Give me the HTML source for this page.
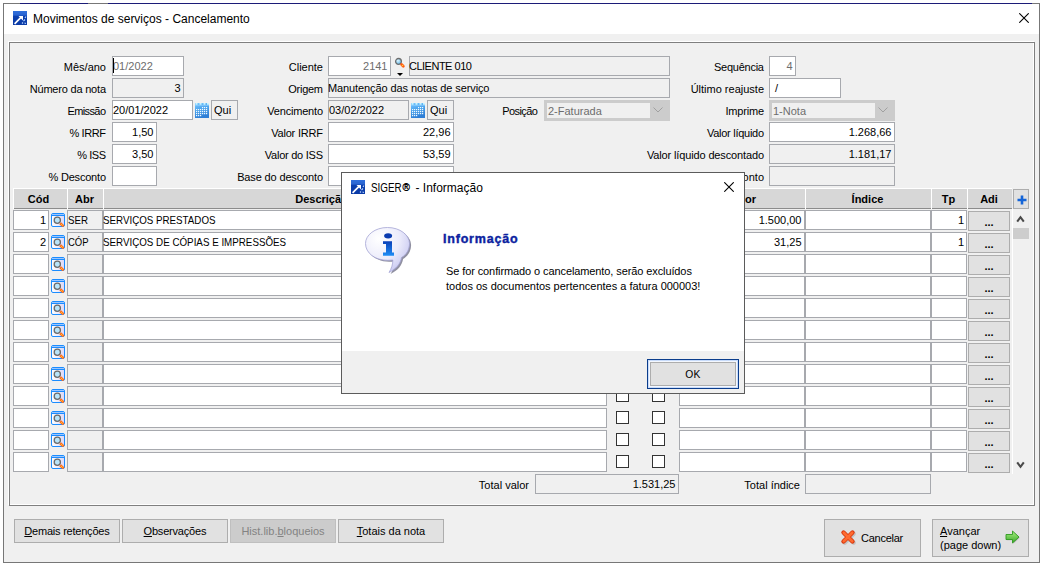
<!DOCTYPE html><html><head><meta charset="utf-8"><style>
*{margin:0;padding:0;box-sizing:border-box}
html,body{width:1044px;height:567px;overflow:hidden;background:#fff}
body{position:relative;font-family:"Liberation Sans",sans-serif;font-size:11px;color:#000}
.b{position:absolute;border:1px solid #a9a9a9}
.f{position:absolute}
.t{position:absolute;white-space:nowrap;line-height:13px;height:13px}
</style></head><body>
<div class="b" style="left:3px;top:3px;width:1037px;height:560px;background:#f0f0f0;border-color:#777;"></div>
<div class="f" style="left:4px;top:4px;width:1035px;height:30px;background:#fff"></div>
<div class="f" style="left:20px;top:3px;width:68px;height:1px;background:#1c1c78"></div>
<div class="f" style="left:108px;top:3px;width:924px;height:1px;background:#1c1c78"></div>
<svg class="f" style="left:13px;top:11px" width="14" height="14" viewBox="0 0 14 14"><defs><linearGradient id="tg" x1="0" y1="0" x2="0" y2="1"><stop offset="0" stop-color="#2f6fdc"/><stop offset="0.3" stop-color="#2a64d0"/><stop offset="0.36" stop-color="#0b3fae"/><stop offset="1" stop-color="#0a3aa6"/></linearGradient></defs><rect width="14" height="14" fill="url(#tg)"/><path d="M5.5 5 H10 V9.5 Z" fill="#fff"/><path d="M1.6 12.8 L8 6.4" stroke="#fff" stroke-width="1.7"/><path d="M10.5 10 l1.5 -1.5 M9 12.5 l1 -1 M11.5 12 l1.5 0.5 M12 7 l1 -1.5" stroke="#b8d4ff" stroke-width="1.1"/></svg>
<div class="t" style="left:33px;top:12px;font-size:12px;line-height:14px;height:14px">Movimentos de serviços - Cancelamento</div>
<svg class="f" style="left:1019px;top:13px" width="10" height="10" viewBox="0 0 10 10"><path d="M0.3 0.3 L9.7 9.7 M9.7 0.3 L0.3 9.7" stroke="#000" stroke-width="1.1"/></svg>
<div class="f" style="left:8px;top:41px;width:1026px;height:464px;border:1px solid #fff"></div>
<div class="f" style="left:9px;top:42px;width:1026px;height:464px;border:1px solid #7f7f7f"></div>
<div class="t" style="right:938.00px;top:61px;text-align:right;">Mês/ano</div>
<div class="b" style="left:112px;top:56px;width:72px;height:20px;background:#fff;border-color:#a7a9ae;"></div>
<div class="t" style="left:113px;top:60px;color:#6d6d6d;">01/2022</div>
<div class="f" style="left:113px;top:58px;width:1px;height:15px;background:#000"></div>
<div class="t" style="right:938.20px;top:83px;text-align:right;letter-spacing:-0.2px;">Número da nota</div>
<div class="b" style="left:112px;top:78px;width:72px;height:20px;background:#f0f0f0;border-color:#a7a9ae;"></div>
<div class="t" style="right:863.50px;top:82px;text-align:right;color:#000;">3</div>
<div class="t" style="right:938.60px;top:105px;text-align:right;letter-spacing:-0.6px;">Emissão</div>
<div class="b" style="left:112px;top:100px;width:81px;height:20px;background:#fff;border-color:#a7a9ae;"></div>
<div class="t" style="left:113px;top:104px;color:#000;">20/01/2022</div>
<svg class="f" style="left:195px;top:103px" width="14" height="15" viewBox="0 0 14 15"><defs><linearGradient id="cg" x1="0" y1="0" x2="0.3" y2="1"><stop offset="0" stop-color="#7cc8ff"/><stop offset="0.5" stop-color="#4aa2ec"/><stop offset="1" stop-color="#2f7fd6"/></linearGradient></defs><rect x="0" y="0" width="14" height="15" fill="url(#cg)"/><path d="M0.5 0.9h2M4.5 0.9h2M8.5 0.9h2M12 0.9h2" stroke="#c8f4ff" stroke-width="1.6"/><rect x="0" y="2" width="14" height="1" fill="#8fd0ff" opacity="0.6"/><rect x="7" y="4" width="1.2" height="1.2" fill="#f0faff"/><rect x="9" y="4" width="1.2" height="1.2" fill="#f0faff"/><rect x="11" y="4" width="1.2" height="1.2" fill="#f0faff"/><rect x="1" y="6" width="1.2" height="1.2" fill="#f0faff"/><rect x="3" y="6" width="1.2" height="1.2" fill="#f0faff"/><rect x="5" y="6" width="1.2" height="1.2" fill="#f0faff"/><rect x="7" y="6" width="1.2" height="1.2" fill="#f0faff"/><rect x="9" y="6" width="1.2" height="1.2" fill="#f0faff"/><rect x="11" y="6" width="1.2" height="1.2" fill="#f0faff"/><rect x="1" y="8" width="1.2" height="1.2" fill="#f0faff"/><rect x="3" y="8" width="1.2" height="1.2" fill="#f0faff"/><rect x="5" y="8" width="1.2" height="1.2" fill="#f0faff"/><rect x="7" y="8" width="1.2" height="1.2" fill="#f0faff"/><rect x="9" y="8" width="1.2" height="1.2" fill="#f0faff"/><rect x="11" y="8" width="1.2" height="1.2" fill="#f0faff"/><rect x="1" y="10" width="1.2" height="1.2" fill="#f0faff"/><rect x="3" y="10" width="1.2" height="1.2" fill="#f0faff"/><rect x="5" y="10" width="1.2" height="1.2" fill="#f0faff"/><rect x="7" y="10" width="1.2" height="1.2" fill="#f0faff"/><rect x="9" y="10" width="1.2" height="1.2" fill="#f0faff"/><rect x="11" y="10" width="1.2" height="1.2" fill="#f0faff"/><rect x="1" y="12" width="1.2" height="1.2" fill="#f0faff"/><rect x="3" y="12" width="1.2" height="1.2" fill="#f0faff"/><rect x="5" y="12" width="1.2" height="1.2" fill="#f0faff"/></svg>
<div class="b" style="left:211px;top:100px;width:27px;height:20px;background:#f0f0f0;border-color:#a7a9ae;"></div>
<div class="t" style="left:214px;top:104px;">Qui</div>
<div class="t" style="right:938.40px;top:127px;text-align:right;letter-spacing:-0.4px;">% IRRF</div>
<div class="b" style="left:112px;top:122px;width:45px;height:20px;background:#fff;border-color:#a7a9ae;"></div>
<div class="t" style="right:890.50px;top:126px;text-align:right;color:#000;">1,50</div>
<div class="t" style="right:938.45px;top:149px;text-align:right;letter-spacing:-0.45px;">% ISS</div>
<div class="b" style="left:112px;top:144px;width:45px;height:20px;background:#fff;border-color:#a7a9ae;"></div>
<div class="t" style="right:890.50px;top:148px;text-align:right;color:#000;">3,50</div>
<div class="t" style="right:938.20px;top:171px;text-align:right;letter-spacing:-0.2px;">% Desconto</div>
<div class="b" style="left:112px;top:166px;width:45px;height:20px;background:#fff;border-color:#a7a9ae;"></div>
<div class="t" style="right:721.00px;top:61px;text-align:right;">Cliente</div>
<div class="b" style="left:328px;top:56px;width:63px;height:20px;background:#fff;border-color:#a7a9ae;"></div>
<div class="t" style="right:656.50px;top:60px;text-align:right;color:#6d6d6d;">2141</div>
<svg class="f" style="left:394px;top:57px" width="12" height="20" viewBox="0 0 12 20"><defs><radialGradient id="mg" cx="0.4" cy="0.35" r="0.7"><stop offset="0" stop-color="#e0f6ff"/><stop offset="1" stop-color="#5ab4e8"/></radialGradient></defs><circle cx="4.5" cy="4.4" r="2.9" fill="url(#mg)" stroke="#6e6e6e" stroke-width="1.3"/><path d="M7.6 7.6 L9.3 9.3" stroke="#ff5a10" stroke-width="2.8" stroke-linecap="round"/><circle cx="8.5" cy="8.5" r="0.8" fill="#ffd040"/><path d="M3 16 L9 16 L6 19 Z" fill="#000"/></svg>
<div class="b" style="left:409px;top:56px;width:261px;height:20px;background:#f0f0f0;border-color:#a7a9ae;"></div>
<div class="t" style="left:409px;top:60px;letter-spacing:-0.5px;color:#000;">CLIENTE 010</div>
<div class="t" style="right:721.28px;top:83px;text-align:right;letter-spacing:-0.28px;">Origem</div>
<div class="b" style="left:328px;top:78px;width:342px;height:20px;background:#f0f0f0;border-color:#a7a9ae;"></div>
<div class="t" style="left:328px;top:82px;letter-spacing:-0.1px;color:#000;">Manutenção das notas de serviço</div>
<div class="t" style="right:721.20px;top:105px;text-align:right;letter-spacing:-0.2px;">Vencimento</div>
<div class="b" style="left:328px;top:100px;width:81px;height:20px;background:#f0f0f0;border-color:#a7a9ae;"></div>
<div class="t" style="left:329px;top:104px;color:#000;">03/02/2022</div>
<svg class="f" style="left:411px;top:103px" width="14" height="15" viewBox="0 0 14 15"><defs><linearGradient id="cg" x1="0" y1="0" x2="0.3" y2="1"><stop offset="0" stop-color="#7cc8ff"/><stop offset="0.5" stop-color="#4aa2ec"/><stop offset="1" stop-color="#2f7fd6"/></linearGradient></defs><rect x="0" y="0" width="14" height="15" fill="url(#cg)"/><path d="M0.5 0.9h2M4.5 0.9h2M8.5 0.9h2M12 0.9h2" stroke="#c8f4ff" stroke-width="1.6"/><rect x="0" y="2" width="14" height="1" fill="#8fd0ff" opacity="0.6"/><rect x="7" y="4" width="1.2" height="1.2" fill="#f0faff"/><rect x="9" y="4" width="1.2" height="1.2" fill="#f0faff"/><rect x="11" y="4" width="1.2" height="1.2" fill="#f0faff"/><rect x="1" y="6" width="1.2" height="1.2" fill="#f0faff"/><rect x="3" y="6" width="1.2" height="1.2" fill="#f0faff"/><rect x="5" y="6" width="1.2" height="1.2" fill="#f0faff"/><rect x="7" y="6" width="1.2" height="1.2" fill="#f0faff"/><rect x="9" y="6" width="1.2" height="1.2" fill="#f0faff"/><rect x="11" y="6" width="1.2" height="1.2" fill="#f0faff"/><rect x="1" y="8" width="1.2" height="1.2" fill="#f0faff"/><rect x="3" y="8" width="1.2" height="1.2" fill="#f0faff"/><rect x="5" y="8" width="1.2" height="1.2" fill="#f0faff"/><rect x="7" y="8" width="1.2" height="1.2" fill="#f0faff"/><rect x="9" y="8" width="1.2" height="1.2" fill="#f0faff"/><rect x="11" y="8" width="1.2" height="1.2" fill="#f0faff"/><rect x="1" y="10" width="1.2" height="1.2" fill="#f0faff"/><rect x="3" y="10" width="1.2" height="1.2" fill="#f0faff"/><rect x="5" y="10" width="1.2" height="1.2" fill="#f0faff"/><rect x="7" y="10" width="1.2" height="1.2" fill="#f0faff"/><rect x="9" y="10" width="1.2" height="1.2" fill="#f0faff"/><rect x="11" y="10" width="1.2" height="1.2" fill="#f0faff"/><rect x="1" y="12" width="1.2" height="1.2" fill="#f0faff"/><rect x="3" y="12" width="1.2" height="1.2" fill="#f0faff"/><rect x="5" y="12" width="1.2" height="1.2" fill="#f0faff"/></svg>
<div class="b" style="left:427px;top:100px;width:27px;height:20px;background:#f0f0f0;border-color:#a7a9ae;"></div>
<div class="t" style="left:430px;top:104px;">Qui</div>
<div class="t" style="right:721.20px;top:127px;text-align:right;letter-spacing:-0.2px;">Valor IRRF</div>
<div class="b" style="left:328px;top:122px;width:126px;height:20px;background:#fff;border-color:#a7a9ae;"></div>
<div class="t" style="right:593.50px;top:126px;text-align:right;color:#000;">22,96</div>
<div class="t" style="right:721.25px;top:149px;text-align:right;letter-spacing:-0.25px;">Valor do ISS</div>
<div class="b" style="left:328px;top:144px;width:126px;height:20px;background:#fff;border-color:#a7a9ae;"></div>
<div class="t" style="right:593.50px;top:148px;text-align:right;color:#000;">53,59</div>
<div class="t" style="right:721.15px;top:171px;text-align:right;letter-spacing:-0.15px;">Base do desconto</div>
<div class="b" style="left:328px;top:166px;width:126px;height:20px;background:#fff;border-color:#a7a9ae;"></div>
<div class="t" style="right:506.55px;top:105px;text-align:right;letter-spacing:-0.55px;">Posição</div>
<div class="b" style="left:544px;top:100px;width:126px;height:21px;background:#cccccc;border-color:#cccccc;"></div>
<div class="f" style="left:547px;top:103px;width:103px;height:15px;background:#f0f0f0"></div>
<div class="t" style="left:548px;top:105px;color:#6d6d6d">2-Faturada</div>
<svg class="f" style="left:653px;top:107px" width="10" height="6" viewBox="0 0 10 6"><path d="M0.5 0.5 L5 5 L9.5 0.5" fill="none" stroke="#a0a0a0" stroke-width="1"/></svg>
<div class="t" style="right:280.25px;top:61px;text-align:right;letter-spacing:-0.25px;">Sequência</div>
<div class="b" style="left:769px;top:56px;width:27px;height:20px;background:#fff;border-color:#a7a9ae;"></div>
<div class="t" style="right:251.50px;top:60px;text-align:right;color:#6d6d6d;">4</div>
<div class="t" style="right:280.00px;top:83px;text-align:right;">Último reajuste</div>
<div class="b" style="left:769px;top:78px;width:72px;height:20px;background:#fff;border-color:#a7a9ae;"></div>
<div class="t" style="left:775px;top:82px;">/</div>
<div class="t" style="right:280.20px;top:105px;text-align:right;letter-spacing:-0.2px;">Imprime</div>
<div class="b" style="left:769px;top:100px;width:126px;height:21px;background:#cccccc;border-color:#cccccc;"></div>
<div class="f" style="left:772px;top:103px;width:103px;height:15px;background:#f0f0f0"></div>
<div class="t" style="left:773px;top:105px;color:#6d6d6d">1-Nota</div>
<svg class="f" style="left:878px;top:107px" width="10" height="6" viewBox="0 0 10 6"><path d="M0.5 0.5 L5 5 L9.5 0.5" fill="none" stroke="#a0a0a0" stroke-width="1"/></svg>
<div class="t" style="right:280.28px;top:127px;text-align:right;letter-spacing:-0.28px;">Valor líquido</div>
<div class="b" style="left:769px;top:122px;width:126px;height:20px;background:#fff;border-color:#a7a9ae;"></div>
<div class="t" style="right:152.50px;top:126px;text-align:right;color:#000;">1.268,66</div>
<div class="t" style="right:280.14px;top:149px;text-align:right;letter-spacing:-0.14px;">Valor líquido descontado</div>
<div class="b" style="left:769px;top:144px;width:126px;height:20px;background:#f0f0f0;border-color:#a7a9ae;"></div>
<div class="t" style="right:152.50px;top:148px;text-align:right;color:#000;">1.181,17</div>
<div class="t" style="right:280.00px;top:171px;text-align:right;">Valor do desconto</div>
<div class="b" style="left:769px;top:166px;width:126px;height:20px;background:#f0f0f0;border-color:#a7a9ae;"></div>
<div class="f" style="left:13px;top:188px;width:999px;height:21px;background:#fff"></div>
<div class="f" style="left:14px;top:189px;width:53px;height:19px;background:#d7d7d7"></div>
<div class="f" style="left:14px;top:208px;width:53px;height:1px;background:#8c8c8c"></div>
<div class="t" style="left:12px;width:53px;top:193px;text-align:center;font-weight:bold">Cód</div>
<div class="f" style="left:68px;top:189px;width:35px;height:19px;background:#d7d7d7"></div>
<div class="f" style="left:68px;top:208px;width:35px;height:1px;background:#8c8c8c"></div>
<div class="t" style="left:67px;width:35px;top:193px;text-align:center;font-weight:bold">Abr</div>
<div class="f" style="left:104px;top:189px;width:435px;height:19px;background:#d7d7d7"></div>
<div class="f" style="left:104px;top:208px;width:435px;height:1px;background:#8c8c8c"></div>
<div class="t" style="left:104px;width:435px;top:193px;text-align:center;font-weight:bold">Descrição</div>
<div class="f" style="left:540px;top:189px;width:139px;height:19px;background:#d7d7d7"></div>
<div class="f" style="left:540px;top:208px;width:139px;height:1px;background:#8c8c8c"></div>
<div class="f" style="left:680px;top:189px;width:125px;height:19px;background:#d7d7d7"></div>
<div class="f" style="left:680px;top:208px;width:125px;height:1px;background:#8c8c8c"></div>
<div class="t" style="left:680px;width:125px;top:193px;text-align:center;font-weight:bold">Valor</div>
<div class="f" style="left:806px;top:189px;width:125px;height:19px;background:#d7d7d7"></div>
<div class="f" style="left:806px;top:208px;width:125px;height:1px;background:#8c8c8c"></div>
<div class="t" style="left:805px;width:125px;top:193px;text-align:center;font-weight:bold">Índice</div>
<div class="f" style="left:932px;top:189px;width:35px;height:19px;background:#d7d7d7"></div>
<div class="f" style="left:932px;top:208px;width:35px;height:1px;background:#8c8c8c"></div>
<div class="t" style="left:931px;width:35px;top:193px;text-align:center;font-weight:bold">Tp</div>
<div class="f" style="left:968px;top:189px;width:44px;height:19px;background:#d7d7d7"></div>
<div class="f" style="left:968px;top:208px;width:44px;height:1px;background:#8c8c8c"></div>
<div class="t" style="left:967px;width:44px;top:193px;text-align:center;font-weight:bold">Adi</div>
<div class="b" style="left:1013px;top:189px;width:16px;height:20px;background:#e1e1e1;border-color:#adadad;"></div>
<svg class="f" style="left:1016.5px;top:194.5px" width="10" height="10" viewBox="0 0 10 10"><path d="M5 0.5 V9.5 M0.5 5 H9.5" stroke="#1565d8" stroke-width="2.6"/></svg>
<div class="b" style="left:13px;top:210px;width:36px;height:20px;background:#fff;border-color:#a7a9ae;"></div>
<div class="t" style="right:998.00px;top:214px;text-align:right;">1</div>
<svg class="f" style="left:51px;top:213px" width="14" height="14" viewBox="0 0 14 14"><defs><linearGradient id="sg" x1="0" y1="0" x2="1" y2="0"><stop offset="0" stop-color="#ffffff"/><stop offset="1" stop-color="#dcd6f4"/></linearGradient></defs><rect x="0.5" y="0.5" width="13" height="13" rx="1.5" fill="url(#sg)" stroke="#1a8cff" stroke-width="1"/><path d="M1 1.5 H13" stroke="#9cc6ff" stroke-width="1"/><path d="M1 2.5 H13" stroke="#1a8cff" stroke-width="1"/><circle cx="6.3" cy="7.2" r="3.1" fill="#b8e4fa" stroke="#6b6b6b" stroke-width="1.3"/><path d="M9.2 10.2 L12.6 13.4" stroke="#ff6a1a" stroke-width="2.6"/><path d="M10 11 L11.8 12.6" stroke="#ffd040" stroke-width="0.9"/></svg>
<div class="b" style="left:67px;top:210px;width:36px;height:20px;background:#f0f0f0;border-color:#a7a9ae;"></div>
<div class="t" style="left:68px;top:214px;transform:scaleX(0.8810);transform-origin:0 0;">SER</div>
<div class="b" style="left:103px;top:210px;width:504px;height:20px;background:#fff;border-color:#a7a9ae;"></div>
<div class="t" style="left:103px;top:214px;transform:scaleX(0.8880);transform-origin:0 0;">SERVIÇOS PRESTADOS</div>
<div class="f" style="left:616px;top:213px;width:13px;height:13px;border:1px solid #333;background:#fff"></div>
<div class="f" style="left:652px;top:213px;width:13px;height:13px;border:1px solid #333;background:#fff"></div>
<div class="b" style="left:679px;top:210px;width:126px;height:20px;background:#fff;border-color:#a7a9ae;"></div>
<div class="t" style="right:242.50px;top:214px;text-align:right;">1.500,00</div>
<div class="b" style="left:805px;top:210px;width:126px;height:20px;background:#fff;border-color:#a7a9ae;"></div>
<div class="b" style="left:931px;top:210px;width:36px;height:20px;background:#fff;border-color:#a7a9ae;"></div>
<div class="t" style="right:80.00px;top:214px;text-align:right;">1</div>
<div class="b" style="left:968px;top:211px;width:42px;height:20px;background:#e1e1e1;border-color:#adadad;"></div>
<div class="t" style="left:968px;width:42px;top:216px;text-align:center;font-weight:bold">...</div>
<div class="b" style="left:13px;top:232px;width:36px;height:20px;background:#fff;border-color:#a7a9ae;"></div>
<div class="t" style="right:998.00px;top:236px;text-align:right;">2</div>
<svg class="f" style="left:51px;top:235px" width="14" height="14" viewBox="0 0 14 14"><defs><linearGradient id="sg" x1="0" y1="0" x2="1" y2="0"><stop offset="0" stop-color="#ffffff"/><stop offset="1" stop-color="#dcd6f4"/></linearGradient></defs><rect x="0.5" y="0.5" width="13" height="13" rx="1.5" fill="url(#sg)" stroke="#1a8cff" stroke-width="1"/><path d="M1 1.5 H13" stroke="#9cc6ff" stroke-width="1"/><path d="M1 2.5 H13" stroke="#1a8cff" stroke-width="1"/><circle cx="6.3" cy="7.2" r="3.1" fill="#b8e4fa" stroke="#6b6b6b" stroke-width="1.3"/><path d="M9.2 10.2 L12.6 13.4" stroke="#ff6a1a" stroke-width="2.6"/><path d="M10 11 L11.8 12.6" stroke="#ffd040" stroke-width="0.9"/></svg>
<div class="b" style="left:67px;top:232px;width:36px;height:20px;background:#f0f0f0;border-color:#a7a9ae;"></div>
<div class="t" style="left:68px;top:236px;transform:scaleX(0.8636);transform-origin:0 0;">CÓP</div>
<div class="b" style="left:103px;top:232px;width:504px;height:20px;background:#fff;border-color:#a7a9ae;"></div>
<div class="t" style="left:103px;top:236px;transform:scaleX(0.8897);transform-origin:0 0;">SERVIÇOS DE CÓPIAS E IMPRESSÕES</div>
<div class="f" style="left:616px;top:235px;width:13px;height:13px;border:1px solid #333;background:#fff"></div>
<div class="f" style="left:652px;top:235px;width:13px;height:13px;border:1px solid #333;background:#fff"></div>
<div class="b" style="left:679px;top:232px;width:126px;height:20px;background:#fff;border-color:#a7a9ae;"></div>
<div class="t" style="right:242.50px;top:236px;text-align:right;">31,25</div>
<div class="b" style="left:805px;top:232px;width:126px;height:20px;background:#fff;border-color:#a7a9ae;"></div>
<div class="b" style="left:931px;top:232px;width:36px;height:20px;background:#fff;border-color:#a7a9ae;"></div>
<div class="t" style="right:80.00px;top:236px;text-align:right;">1</div>
<div class="b" style="left:968px;top:233px;width:42px;height:20px;background:#e1e1e1;border-color:#adadad;"></div>
<div class="t" style="left:968px;width:42px;top:238px;text-align:center;font-weight:bold">...</div>
<div class="b" style="left:13px;top:254px;width:36px;height:20px;background:#fff;border-color:#a7a9ae;"></div>
<svg class="f" style="left:51px;top:257px" width="14" height="14" viewBox="0 0 14 14"><defs><linearGradient id="sg" x1="0" y1="0" x2="1" y2="0"><stop offset="0" stop-color="#ffffff"/><stop offset="1" stop-color="#dcd6f4"/></linearGradient></defs><rect x="0.5" y="0.5" width="13" height="13" rx="1.5" fill="url(#sg)" stroke="#1a8cff" stroke-width="1"/><path d="M1 1.5 H13" stroke="#9cc6ff" stroke-width="1"/><path d="M1 2.5 H13" stroke="#1a8cff" stroke-width="1"/><circle cx="6.3" cy="7.2" r="3.1" fill="#b8e4fa" stroke="#6b6b6b" stroke-width="1.3"/><path d="M9.2 10.2 L12.6 13.4" stroke="#ff6a1a" stroke-width="2.6"/><path d="M10 11 L11.8 12.6" stroke="#ffd040" stroke-width="0.9"/></svg>
<div class="b" style="left:67px;top:254px;width:36px;height:20px;background:#f0f0f0;border-color:#a7a9ae;"></div>
<div class="b" style="left:103px;top:254px;width:504px;height:20px;background:#fff;border-color:#a7a9ae;"></div>
<div class="f" style="left:616px;top:257px;width:13px;height:13px;border:1px solid #333;background:#fff"></div>
<div class="f" style="left:652px;top:257px;width:13px;height:13px;border:1px solid #333;background:#fff"></div>
<div class="b" style="left:679px;top:254px;width:126px;height:20px;background:#fff;border-color:#a7a9ae;"></div>
<div class="b" style="left:805px;top:254px;width:126px;height:20px;background:#fff;border-color:#a7a9ae;"></div>
<div class="b" style="left:931px;top:254px;width:36px;height:20px;background:#fff;border-color:#a7a9ae;"></div>
<div class="b" style="left:968px;top:255px;width:42px;height:20px;background:#e1e1e1;border-color:#adadad;"></div>
<div class="t" style="left:968px;width:42px;top:260px;text-align:center;font-weight:bold">...</div>
<div class="b" style="left:13px;top:276px;width:36px;height:20px;background:#fff;border-color:#a7a9ae;"></div>
<svg class="f" style="left:51px;top:279px" width="14" height="14" viewBox="0 0 14 14"><defs><linearGradient id="sg" x1="0" y1="0" x2="1" y2="0"><stop offset="0" stop-color="#ffffff"/><stop offset="1" stop-color="#dcd6f4"/></linearGradient></defs><rect x="0.5" y="0.5" width="13" height="13" rx="1.5" fill="url(#sg)" stroke="#1a8cff" stroke-width="1"/><path d="M1 1.5 H13" stroke="#9cc6ff" stroke-width="1"/><path d="M1 2.5 H13" stroke="#1a8cff" stroke-width="1"/><circle cx="6.3" cy="7.2" r="3.1" fill="#b8e4fa" stroke="#6b6b6b" stroke-width="1.3"/><path d="M9.2 10.2 L12.6 13.4" stroke="#ff6a1a" stroke-width="2.6"/><path d="M10 11 L11.8 12.6" stroke="#ffd040" stroke-width="0.9"/></svg>
<div class="b" style="left:67px;top:276px;width:36px;height:20px;background:#f0f0f0;border-color:#a7a9ae;"></div>
<div class="b" style="left:103px;top:276px;width:504px;height:20px;background:#fff;border-color:#a7a9ae;"></div>
<div class="f" style="left:616px;top:279px;width:13px;height:13px;border:1px solid #333;background:#fff"></div>
<div class="f" style="left:652px;top:279px;width:13px;height:13px;border:1px solid #333;background:#fff"></div>
<div class="b" style="left:679px;top:276px;width:126px;height:20px;background:#fff;border-color:#a7a9ae;"></div>
<div class="b" style="left:805px;top:276px;width:126px;height:20px;background:#fff;border-color:#a7a9ae;"></div>
<div class="b" style="left:931px;top:276px;width:36px;height:20px;background:#fff;border-color:#a7a9ae;"></div>
<div class="b" style="left:968px;top:277px;width:42px;height:20px;background:#e1e1e1;border-color:#adadad;"></div>
<div class="t" style="left:968px;width:42px;top:282px;text-align:center;font-weight:bold">...</div>
<div class="b" style="left:13px;top:298px;width:36px;height:20px;background:#fff;border-color:#a7a9ae;"></div>
<svg class="f" style="left:51px;top:301px" width="14" height="14" viewBox="0 0 14 14"><defs><linearGradient id="sg" x1="0" y1="0" x2="1" y2="0"><stop offset="0" stop-color="#ffffff"/><stop offset="1" stop-color="#dcd6f4"/></linearGradient></defs><rect x="0.5" y="0.5" width="13" height="13" rx="1.5" fill="url(#sg)" stroke="#1a8cff" stroke-width="1"/><path d="M1 1.5 H13" stroke="#9cc6ff" stroke-width="1"/><path d="M1 2.5 H13" stroke="#1a8cff" stroke-width="1"/><circle cx="6.3" cy="7.2" r="3.1" fill="#b8e4fa" stroke="#6b6b6b" stroke-width="1.3"/><path d="M9.2 10.2 L12.6 13.4" stroke="#ff6a1a" stroke-width="2.6"/><path d="M10 11 L11.8 12.6" stroke="#ffd040" stroke-width="0.9"/></svg>
<div class="b" style="left:67px;top:298px;width:36px;height:20px;background:#f0f0f0;border-color:#a7a9ae;"></div>
<div class="b" style="left:103px;top:298px;width:504px;height:20px;background:#fff;border-color:#a7a9ae;"></div>
<div class="f" style="left:616px;top:301px;width:13px;height:13px;border:1px solid #333;background:#fff"></div>
<div class="f" style="left:652px;top:301px;width:13px;height:13px;border:1px solid #333;background:#fff"></div>
<div class="b" style="left:679px;top:298px;width:126px;height:20px;background:#fff;border-color:#a7a9ae;"></div>
<div class="b" style="left:805px;top:298px;width:126px;height:20px;background:#fff;border-color:#a7a9ae;"></div>
<div class="b" style="left:931px;top:298px;width:36px;height:20px;background:#fff;border-color:#a7a9ae;"></div>
<div class="b" style="left:968px;top:299px;width:42px;height:20px;background:#e1e1e1;border-color:#adadad;"></div>
<div class="t" style="left:968px;width:42px;top:304px;text-align:center;font-weight:bold">...</div>
<div class="b" style="left:13px;top:320px;width:36px;height:20px;background:#fff;border-color:#a7a9ae;"></div>
<svg class="f" style="left:51px;top:323px" width="14" height="14" viewBox="0 0 14 14"><defs><linearGradient id="sg" x1="0" y1="0" x2="1" y2="0"><stop offset="0" stop-color="#ffffff"/><stop offset="1" stop-color="#dcd6f4"/></linearGradient></defs><rect x="0.5" y="0.5" width="13" height="13" rx="1.5" fill="url(#sg)" stroke="#1a8cff" stroke-width="1"/><path d="M1 1.5 H13" stroke="#9cc6ff" stroke-width="1"/><path d="M1 2.5 H13" stroke="#1a8cff" stroke-width="1"/><circle cx="6.3" cy="7.2" r="3.1" fill="#b8e4fa" stroke="#6b6b6b" stroke-width="1.3"/><path d="M9.2 10.2 L12.6 13.4" stroke="#ff6a1a" stroke-width="2.6"/><path d="M10 11 L11.8 12.6" stroke="#ffd040" stroke-width="0.9"/></svg>
<div class="b" style="left:67px;top:320px;width:36px;height:20px;background:#f0f0f0;border-color:#a7a9ae;"></div>
<div class="b" style="left:103px;top:320px;width:504px;height:20px;background:#fff;border-color:#a7a9ae;"></div>
<div class="f" style="left:616px;top:323px;width:13px;height:13px;border:1px solid #333;background:#fff"></div>
<div class="f" style="left:652px;top:323px;width:13px;height:13px;border:1px solid #333;background:#fff"></div>
<div class="b" style="left:679px;top:320px;width:126px;height:20px;background:#fff;border-color:#a7a9ae;"></div>
<div class="b" style="left:805px;top:320px;width:126px;height:20px;background:#fff;border-color:#a7a9ae;"></div>
<div class="b" style="left:931px;top:320px;width:36px;height:20px;background:#fff;border-color:#a7a9ae;"></div>
<div class="b" style="left:968px;top:321px;width:42px;height:20px;background:#e1e1e1;border-color:#adadad;"></div>
<div class="t" style="left:968px;width:42px;top:326px;text-align:center;font-weight:bold">...</div>
<div class="b" style="left:13px;top:342px;width:36px;height:20px;background:#fff;border-color:#a7a9ae;"></div>
<svg class="f" style="left:51px;top:345px" width="14" height="14" viewBox="0 0 14 14"><defs><linearGradient id="sg" x1="0" y1="0" x2="1" y2="0"><stop offset="0" stop-color="#ffffff"/><stop offset="1" stop-color="#dcd6f4"/></linearGradient></defs><rect x="0.5" y="0.5" width="13" height="13" rx="1.5" fill="url(#sg)" stroke="#1a8cff" stroke-width="1"/><path d="M1 1.5 H13" stroke="#9cc6ff" stroke-width="1"/><path d="M1 2.5 H13" stroke="#1a8cff" stroke-width="1"/><circle cx="6.3" cy="7.2" r="3.1" fill="#b8e4fa" stroke="#6b6b6b" stroke-width="1.3"/><path d="M9.2 10.2 L12.6 13.4" stroke="#ff6a1a" stroke-width="2.6"/><path d="M10 11 L11.8 12.6" stroke="#ffd040" stroke-width="0.9"/></svg>
<div class="b" style="left:67px;top:342px;width:36px;height:20px;background:#f0f0f0;border-color:#a7a9ae;"></div>
<div class="b" style="left:103px;top:342px;width:504px;height:20px;background:#fff;border-color:#a7a9ae;"></div>
<div class="f" style="left:616px;top:345px;width:13px;height:13px;border:1px solid #333;background:#fff"></div>
<div class="f" style="left:652px;top:345px;width:13px;height:13px;border:1px solid #333;background:#fff"></div>
<div class="b" style="left:679px;top:342px;width:126px;height:20px;background:#fff;border-color:#a7a9ae;"></div>
<div class="b" style="left:805px;top:342px;width:126px;height:20px;background:#fff;border-color:#a7a9ae;"></div>
<div class="b" style="left:931px;top:342px;width:36px;height:20px;background:#fff;border-color:#a7a9ae;"></div>
<div class="b" style="left:968px;top:343px;width:42px;height:20px;background:#e1e1e1;border-color:#adadad;"></div>
<div class="t" style="left:968px;width:42px;top:348px;text-align:center;font-weight:bold">...</div>
<div class="b" style="left:13px;top:364px;width:36px;height:20px;background:#fff;border-color:#a7a9ae;"></div>
<svg class="f" style="left:51px;top:367px" width="14" height="14" viewBox="0 0 14 14"><defs><linearGradient id="sg" x1="0" y1="0" x2="1" y2="0"><stop offset="0" stop-color="#ffffff"/><stop offset="1" stop-color="#dcd6f4"/></linearGradient></defs><rect x="0.5" y="0.5" width="13" height="13" rx="1.5" fill="url(#sg)" stroke="#1a8cff" stroke-width="1"/><path d="M1 1.5 H13" stroke="#9cc6ff" stroke-width="1"/><path d="M1 2.5 H13" stroke="#1a8cff" stroke-width="1"/><circle cx="6.3" cy="7.2" r="3.1" fill="#b8e4fa" stroke="#6b6b6b" stroke-width="1.3"/><path d="M9.2 10.2 L12.6 13.4" stroke="#ff6a1a" stroke-width="2.6"/><path d="M10 11 L11.8 12.6" stroke="#ffd040" stroke-width="0.9"/></svg>
<div class="b" style="left:67px;top:364px;width:36px;height:20px;background:#f0f0f0;border-color:#a7a9ae;"></div>
<div class="b" style="left:103px;top:364px;width:504px;height:20px;background:#fff;border-color:#a7a9ae;"></div>
<div class="f" style="left:616px;top:367px;width:13px;height:13px;border:1px solid #333;background:#fff"></div>
<div class="f" style="left:652px;top:367px;width:13px;height:13px;border:1px solid #333;background:#fff"></div>
<div class="b" style="left:679px;top:364px;width:126px;height:20px;background:#fff;border-color:#a7a9ae;"></div>
<div class="b" style="left:805px;top:364px;width:126px;height:20px;background:#fff;border-color:#a7a9ae;"></div>
<div class="b" style="left:931px;top:364px;width:36px;height:20px;background:#fff;border-color:#a7a9ae;"></div>
<div class="b" style="left:968px;top:365px;width:42px;height:20px;background:#e1e1e1;border-color:#adadad;"></div>
<div class="t" style="left:968px;width:42px;top:370px;text-align:center;font-weight:bold">...</div>
<div class="b" style="left:13px;top:386px;width:36px;height:20px;background:#fff;border-color:#a7a9ae;"></div>
<svg class="f" style="left:51px;top:389px" width="14" height="14" viewBox="0 0 14 14"><defs><linearGradient id="sg" x1="0" y1="0" x2="1" y2="0"><stop offset="0" stop-color="#ffffff"/><stop offset="1" stop-color="#dcd6f4"/></linearGradient></defs><rect x="0.5" y="0.5" width="13" height="13" rx="1.5" fill="url(#sg)" stroke="#1a8cff" stroke-width="1"/><path d="M1 1.5 H13" stroke="#9cc6ff" stroke-width="1"/><path d="M1 2.5 H13" stroke="#1a8cff" stroke-width="1"/><circle cx="6.3" cy="7.2" r="3.1" fill="#b8e4fa" stroke="#6b6b6b" stroke-width="1.3"/><path d="M9.2 10.2 L12.6 13.4" stroke="#ff6a1a" stroke-width="2.6"/><path d="M10 11 L11.8 12.6" stroke="#ffd040" stroke-width="0.9"/></svg>
<div class="b" style="left:67px;top:386px;width:36px;height:20px;background:#f0f0f0;border-color:#a7a9ae;"></div>
<div class="b" style="left:103px;top:386px;width:504px;height:20px;background:#fff;border-color:#a7a9ae;"></div>
<div class="f" style="left:616px;top:389px;width:13px;height:13px;border:1px solid #333;background:#fff"></div>
<div class="f" style="left:652px;top:389px;width:13px;height:13px;border:1px solid #333;background:#fff"></div>
<div class="b" style="left:679px;top:386px;width:126px;height:20px;background:#fff;border-color:#a7a9ae;"></div>
<div class="b" style="left:805px;top:386px;width:126px;height:20px;background:#fff;border-color:#a7a9ae;"></div>
<div class="b" style="left:931px;top:386px;width:36px;height:20px;background:#fff;border-color:#a7a9ae;"></div>
<div class="b" style="left:968px;top:387px;width:42px;height:20px;background:#e1e1e1;border-color:#adadad;"></div>
<div class="t" style="left:968px;width:42px;top:392px;text-align:center;font-weight:bold">...</div>
<div class="b" style="left:13px;top:408px;width:36px;height:20px;background:#fff;border-color:#a7a9ae;"></div>
<svg class="f" style="left:51px;top:411px" width="14" height="14" viewBox="0 0 14 14"><defs><linearGradient id="sg" x1="0" y1="0" x2="1" y2="0"><stop offset="0" stop-color="#ffffff"/><stop offset="1" stop-color="#dcd6f4"/></linearGradient></defs><rect x="0.5" y="0.5" width="13" height="13" rx="1.5" fill="url(#sg)" stroke="#1a8cff" stroke-width="1"/><path d="M1 1.5 H13" stroke="#9cc6ff" stroke-width="1"/><path d="M1 2.5 H13" stroke="#1a8cff" stroke-width="1"/><circle cx="6.3" cy="7.2" r="3.1" fill="#b8e4fa" stroke="#6b6b6b" stroke-width="1.3"/><path d="M9.2 10.2 L12.6 13.4" stroke="#ff6a1a" stroke-width="2.6"/><path d="M10 11 L11.8 12.6" stroke="#ffd040" stroke-width="0.9"/></svg>
<div class="b" style="left:67px;top:408px;width:36px;height:20px;background:#f0f0f0;border-color:#a7a9ae;"></div>
<div class="b" style="left:103px;top:408px;width:504px;height:20px;background:#fff;border-color:#a7a9ae;"></div>
<div class="f" style="left:616px;top:411px;width:13px;height:13px;border:1px solid #333;background:#fff"></div>
<div class="f" style="left:652px;top:411px;width:13px;height:13px;border:1px solid #333;background:#fff"></div>
<div class="b" style="left:679px;top:408px;width:126px;height:20px;background:#fff;border-color:#a7a9ae;"></div>
<div class="b" style="left:805px;top:408px;width:126px;height:20px;background:#fff;border-color:#a7a9ae;"></div>
<div class="b" style="left:931px;top:408px;width:36px;height:20px;background:#fff;border-color:#a7a9ae;"></div>
<div class="b" style="left:968px;top:409px;width:42px;height:20px;background:#e1e1e1;border-color:#adadad;"></div>
<div class="t" style="left:968px;width:42px;top:414px;text-align:center;font-weight:bold">...</div>
<div class="b" style="left:13px;top:430px;width:36px;height:20px;background:#fff;border-color:#a7a9ae;"></div>
<svg class="f" style="left:51px;top:433px" width="14" height="14" viewBox="0 0 14 14"><defs><linearGradient id="sg" x1="0" y1="0" x2="1" y2="0"><stop offset="0" stop-color="#ffffff"/><stop offset="1" stop-color="#dcd6f4"/></linearGradient></defs><rect x="0.5" y="0.5" width="13" height="13" rx="1.5" fill="url(#sg)" stroke="#1a8cff" stroke-width="1"/><path d="M1 1.5 H13" stroke="#9cc6ff" stroke-width="1"/><path d="M1 2.5 H13" stroke="#1a8cff" stroke-width="1"/><circle cx="6.3" cy="7.2" r="3.1" fill="#b8e4fa" stroke="#6b6b6b" stroke-width="1.3"/><path d="M9.2 10.2 L12.6 13.4" stroke="#ff6a1a" stroke-width="2.6"/><path d="M10 11 L11.8 12.6" stroke="#ffd040" stroke-width="0.9"/></svg>
<div class="b" style="left:67px;top:430px;width:36px;height:20px;background:#f0f0f0;border-color:#a7a9ae;"></div>
<div class="b" style="left:103px;top:430px;width:504px;height:20px;background:#fff;border-color:#a7a9ae;"></div>
<div class="f" style="left:616px;top:433px;width:13px;height:13px;border:1px solid #333;background:#fff"></div>
<div class="f" style="left:652px;top:433px;width:13px;height:13px;border:1px solid #333;background:#fff"></div>
<div class="b" style="left:679px;top:430px;width:126px;height:20px;background:#fff;border-color:#a7a9ae;"></div>
<div class="b" style="left:805px;top:430px;width:126px;height:20px;background:#fff;border-color:#a7a9ae;"></div>
<div class="b" style="left:931px;top:430px;width:36px;height:20px;background:#fff;border-color:#a7a9ae;"></div>
<div class="b" style="left:968px;top:431px;width:42px;height:20px;background:#e1e1e1;border-color:#adadad;"></div>
<div class="t" style="left:968px;width:42px;top:436px;text-align:center;font-weight:bold">...</div>
<div class="b" style="left:13px;top:452px;width:36px;height:20px;background:#fff;border-color:#a7a9ae;"></div>
<svg class="f" style="left:51px;top:455px" width="14" height="14" viewBox="0 0 14 14"><defs><linearGradient id="sg" x1="0" y1="0" x2="1" y2="0"><stop offset="0" stop-color="#ffffff"/><stop offset="1" stop-color="#dcd6f4"/></linearGradient></defs><rect x="0.5" y="0.5" width="13" height="13" rx="1.5" fill="url(#sg)" stroke="#1a8cff" stroke-width="1"/><path d="M1 1.5 H13" stroke="#9cc6ff" stroke-width="1"/><path d="M1 2.5 H13" stroke="#1a8cff" stroke-width="1"/><circle cx="6.3" cy="7.2" r="3.1" fill="#b8e4fa" stroke="#6b6b6b" stroke-width="1.3"/><path d="M9.2 10.2 L12.6 13.4" stroke="#ff6a1a" stroke-width="2.6"/><path d="M10 11 L11.8 12.6" stroke="#ffd040" stroke-width="0.9"/></svg>
<div class="b" style="left:67px;top:452px;width:36px;height:20px;background:#f0f0f0;border-color:#a7a9ae;"></div>
<div class="b" style="left:103px;top:452px;width:504px;height:20px;background:#fff;border-color:#a7a9ae;"></div>
<div class="f" style="left:616px;top:455px;width:13px;height:13px;border:1px solid #333;background:#fff"></div>
<div class="f" style="left:652px;top:455px;width:13px;height:13px;border:1px solid #333;background:#fff"></div>
<div class="b" style="left:679px;top:452px;width:126px;height:20px;background:#fff;border-color:#a7a9ae;"></div>
<div class="b" style="left:805px;top:452px;width:126px;height:20px;background:#fff;border-color:#a7a9ae;"></div>
<div class="b" style="left:931px;top:452px;width:36px;height:20px;background:#fff;border-color:#a7a9ae;"></div>
<div class="b" style="left:968px;top:453px;width:42px;height:20px;background:#e1e1e1;border-color:#adadad;"></div>
<div class="t" style="left:968px;width:42px;top:458px;text-align:center;font-weight:bold">...</div>
<div class="f" style="left:1012px;top:209px;width:1px;height:265px;background:#fff"></div>
<svg class="f" style="left:1016px;top:215px" width="9" height="8" viewBox="0 0 9 8"><path d="M1.2 6.6 L4.5 2.2 L7.8 6.6" fill="none" stroke="#4a4a4a" stroke-width="2.1"/></svg>
<div class="f" style="left:1013px;top:228px;width:16px;height:11px;background:#cdcdcd"></div>
<svg class="f" style="left:1016px;top:461px" width="9" height="8" viewBox="0 0 9 8"><path d="M1.2 1.4 L4.5 5.8 L7.8 1.4" fill="none" stroke="#4a4a4a" stroke-width="2.1"/></svg>
<div class="t" style="right:515.00px;top:479px;text-align:right;">Total valor</div>
<div class="b" style="left:535px;top:474px;width:144px;height:20px;background:#f0f0f0;border-color:#a7a9ae;"></div>
<div class="t" style="right:368.50px;top:478px;text-align:right;color:#000;">1.531,25</div>
<div class="t" style="right:244.00px;top:479px;text-align:right;">Total índice</div>
<div class="b" style="left:805px;top:474px;width:126px;height:20px;background:#f0f0f0;border-color:#a7a9ae;"></div>
<div class="b" style="left:14px;top:519px;width:106px;height:24px;background:#e1e1e1;border-color:#adadad;"></div>
<div class="t" style="left:14px;width:106px;top:525px;text-align:center;color:#000;letter-spacing:-0.22px;text-indent:-0.22px;"><u>D</u>emais retenções</div>
<div class="b" style="left:122px;top:519px;width:106px;height:24px;background:#e1e1e1;border-color:#adadad;"></div>
<div class="t" style="left:122px;width:106px;top:525px;text-align:center;color:#000;letter-spacing:-0.2px;text-indent:-0.2px;"><u>O</u>bservações</div>
<div class="b" style="left:230px;top:519px;width:106px;height:24px;background:#cccccc;border-color:#bfbfbf;"></div>
<div class="t" style="left:230px;width:106px;top:525px;text-align:center;color:#838383;">Hist.lib.<u>b</u>loqueios</div>
<div class="b" style="left:338px;top:519px;width:106px;height:24px;background:#e1e1e1;border-color:#adadad;"></div>
<div class="t" style="left:338px;width:106px;top:525px;text-align:center;color:#000;"><u>T</u>otais da nota</div>
<div class="b" style="left:824px;top:519px;width:97px;height:38px;background:#e1e1e1;border-color:#adadad;"></div>
<svg class="f" style="left:840px;top:529px" width="17" height="17" viewBox="0 0 17 17"><path d="M4 4 L13 13 M13 4 L4 13" stroke="#b0b0b0" stroke-width="4.2" stroke-linecap="round" transform="translate(0.8,0.8)" opacity="0.6"/><path d="M3.5 3.5 L12.5 12.5 M12.5 3.5 L3.5 12.5" stroke="#d8380e" stroke-width="4.4" stroke-linecap="round"/><path d="M3.8 3.8 L12.2 12.2 M12.2 3.8 L3.8 12.2" stroke="#ff6a30" stroke-width="2.8" stroke-linecap="round"/></svg>
<div class="t" style="left:861px;top:532px;letter-spacing:-0.25px;">Cancelar</div>
<div class="b" style="left:932px;top:519px;width:97px;height:38px;background:#e1e1e1;border-color:#adadad;"></div>
<div class="t" style="left:940px;top:525px;"><u>A</u>vançar</div>
<div class="t" style="left:940px;top:539px;">(page down)</div>
<svg class="f" style="left:1005px;top:530px" width="15" height="14" viewBox="0 0 15 14"><defs><linearGradient id="ag" x1="0" y1="0" x2="0" y2="1"><stop offset="0" stop-color="#a8f080"/><stop offset="1" stop-color="#3aa82a"/></linearGradient></defs><path d="M1 4.5 H7.5 V1 L14 7 L7.5 13 V9.5 H1 Z" fill="#8a8a8a" opacity="0.5" transform="translate(0.8,0.8)"/><path d="M1 4.5 H7.5 V1 L14 7 L7.5 13 V9.5 H1 Z" fill="url(#ag)" stroke="#2f9a1f" stroke-width="0.9"/></svg>
<div class="f" style="left:341px;top:172px;width:404px;height:222px;border:1px solid #5b5b5b;background:#fff"></div>
<div class="f" style="left:342px;top:351px;width:402px;height:42px;background:#f0f0f0"></div>
<svg class="f" style="left:351px;top:180px" width="14" height="14" viewBox="0 0 14 14"><defs><linearGradient id="tg2" x1="0" y1="0" x2="0" y2="1"><stop offset="0" stop-color="#2f6fdc"/><stop offset="0.3" stop-color="#2a64d0"/><stop offset="0.36" stop-color="#0b3fae"/><stop offset="1" stop-color="#0a3aa6"/></linearGradient></defs><rect width="14" height="14" fill="url(#tg2)"/><path d="M5.5 5 H10 V9.5 Z" fill="#fff"/><path d="M1.6 12.8 L8 6.4" stroke="#fff" stroke-width="1.7"/><path d="M10.5 10 l1.5 -1.5 M9 12.5 l1 -1 M11.5 12 l1.5 0.5 M12 7 l1 -1.5" stroke="#b8d4ff" stroke-width="1.1"/></svg>
<div class="t" style="left:371px;top:181px;font-size:12px;line-height:14px;height:14px;transform:scaleX(0.82);transform-origin:0 0">SIGER</div>
<div class="t" style="left:402.5px;top:182px;font-size:10px;line-height:12px;height:12px;-webkit-text-stroke:0.3px #000">®</div>
<div class="t" style="left:415.5px;top:181px;font-size:12px;line-height:14px;height:14px">- Informação</div>
<svg class="f" style="left:724px;top:182px" width="10" height="10" viewBox="0 0 10 10"><path d="M0.3 0.3 L9.7 9.7 M9.7 0.3 L0.3 9.7" stroke="#000" stroke-width="1.1"/></svg>
<svg class="f" style="left:363px;top:225px" width="52" height="52" viewBox="0 0 52 52">
<defs><radialGradient id="ig" cx="0.3" cy="0.25" r="0.85"><stop offset="0" stop-color="#ffffff"/><stop offset="0.55" stop-color="#ececfb"/><stop offset="1" stop-color="#c4c4f0"/></radialGradient>
<linearGradient id="ib" x1="0" y1="0" x2="0" y2="1"><stop offset="0" stop-color="#0b40b8"/><stop offset="1" stop-color="#1f8ef5"/></linearGradient></defs>
<path d="M24.5 2.5 C37 2.5 46.5 10 46.5 18.5 C46.5 25 43 30 38.5 32.5 C37.5 39 33 44 26 47.5 C28.5 43.5 30 39 29.8 35 C28 35.2 26 35.3 24.5 35.3 C12 35.3 2.5 28 2.5 18.5 C2.5 10 12 2.5 24.5 2.5 Z" fill="#7d7d90" opacity="0.85" transform="translate(1.6,1.4)"/>
<path d="M24.5 2.5 C37 2.5 46.5 10 46.5 18.5 C46.5 25 43 30 38.5 32.5 C37.5 39 33 44 26 47.5 C28.5 43.5 30 39 29.8 35 C28 35.2 26 35.3 24.5 35.3 C12 35.3 2.5 28 2.5 18.5 C2.5 10 12 2.5 24.5 2.5 Z" fill="url(#ig)" stroke="#a4a4d4" stroke-width="0.8"/>
<ellipse cx="25.1" cy="10.8" rx="4" ry="2.6" fill="#0b3cb0"/>
<path d="M20 16.3 H29 V27.6 H31 V30.8 H20 V27.6 H23 V19 H20 Z" fill="url(#ib)"/>
</svg>
<div class="t" style="left:443px;top:232px;font-weight:bold;font-size:12.5px;line-height:14px;height:14px;color:#0c1fa0;letter-spacing:0.8px;-webkit-text-stroke:0.4px #0c1fa0">Informação</div>
<div class="t" style="left:446px;top:265px;letter-spacing:-0.1px;">Se for confirmado o cancelamento, serão excluídos</div>
<div class="t" style="left:446px;top:280px;">todos os documentos pertencentes a fatura 000003!</div>
<div class="f" style="left:647px;top:359px;width:92px;height:30px;border:1px solid #0b3d8c;background:#f4f8ff"></div>
<div class="f" style="left:648px;top:360px;width:90px;height:28px;border:1px solid #c9dcfa"></div>
<div class="f" style="left:650px;top:362px;width:86px;height:24px;border:1px solid #adadad;background:#e1e1e1"></div>
<div class="t" style="left:647px;width:92px;top:368px;text-align:center;font-size:10.3px;letter-spacing:0.2px">OK</div>
</body></html>
